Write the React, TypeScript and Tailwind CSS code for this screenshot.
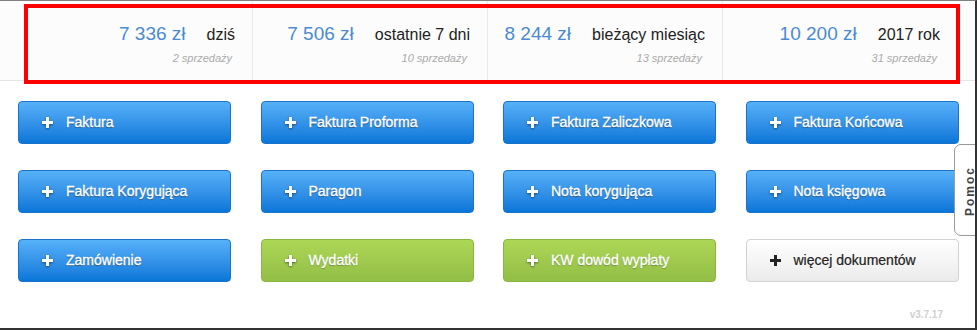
const stats = [
  { amount: '7 336 zł', label: 'dziś', sales: '2 sprzedaży' },
  { amount: '7 506 zł', label: 'ostatnie 7 dni', sales: '10 sprzedaży' },
  { amount: '8 244 zł', label: 'bieżący miesiąc', sales: '13 sprzedaży' },
  { amount: '10 200 zł', label: '2017 rok', sales: '31 sprzedaży' },
];

const buttons = [
  { label: 'Faktura', kind: 'blue' },
  { label: 'Faktura Proforma', kind: 'blue' },
  { label: 'Faktura Zaliczkowa', kind: 'blue' },
  { label: 'Faktura Końcowa', kind: 'blue' },
  { label: 'Faktura Korygująca', kind: 'blue' },
  { label: 'Paragon', kind: 'blue' },
  { label: 'Nota korygująca', kind: 'blue' },
  { label: 'Nota księgowa', kind: 'blue' },
  { label: 'Zamówienie', kind: 'blue' },
  { label: 'Wydatki', kind: 'green' },
  { label: 'KW dowód wypłaty', kind: 'green' },
  { label: 'więcej dokumentów', kind: 'white' },
];

const styles: Record<string, string> = {
  blue: 'border-[#1b72c6] bg-gradient-to-b from-[#56b1f9] to-[#0676d8] text-white [-webkit-text-stroke:0.35px_white] [text-shadow:0_1px_1px_rgba(0,0,0,0.5)]',
  green: 'border-[#8cb53f] bg-gradient-to-b from-[#acd755] to-[#93be47] text-white [-webkit-text-stroke:0.35px_white] [text-shadow:0_1px_1px_rgba(0,0,0,0.4)]',
  white: 'border-[#d2d2d2] bg-gradient-to-b from-[#ffffff] to-[#ebebeb] text-[#222] [-webkit-text-stroke:0.2px_#222]',
};

function PlusIcon({ dark }: { dark: boolean }) {
  return (
    <svg width="11" height="11" viewBox="0 0 11 11" className={dark ? '' : 'drop-shadow-[0_1px_1px_rgba(0,0,0,0.45)]'}>
      <rect x="4" y="0" width="3" height="11" fill={dark ? '#222' : '#fff'} />
      <rect x="0" y="4" width="11" height="3" fill={dark ? '#222' : '#fff'} />
    </svg>
  );
}

export default function App() {
  return (
    <div className="relative w-[977px] h-[330px] overflow-hidden bg-white border-t border-t-[#808080] border-r-2 border-r-[#333] border-b-2 border-b-[#333] font-['Liberation_Sans',Arial,sans-serif]">
      {/* stats band */}
      <div className="h-[80px] bg-[#fcfcfc] border-b border-[#e6e6e6]">
        <div className="ml-[17px] w-[940px] h-full grid grid-cols-4">
          {stats.map((s, i) => (
            <div key={i} className={`flex flex-col items-end pr-[17px] pt-[21px] ${i > 0 ? 'border-l border-[#e8e8ee]' : ''}`}>
              <div className="flex items-baseline gap-[21px]">
                <span className="text-[19px] leading-[24px] text-[#4a8bd1]">{s.amount}</span>
                <span className="text-[16px] leading-[24px] text-[#222]">{s.label}</span>
              </div>
              <span className="mt-[4px] mr-[3px] text-[11px] leading-[14px] italic text-[#aaa]">{s.sales}</span>
            </div>
          ))}
        </div>
      </div>

      {/* buttons */}
      <div className="ml-[18px] mt-[20px] grid grid-cols-[repeat(4,213px)] gap-x-[29.5px] gap-y-[26px]">
        {buttons.map((b) => (
          <button
            key={b.label}
            type="button"
            className={`h-[43px] rounded-[4px] border flex items-center pl-[23px] gap-[13px] text-[14px] ${styles[b.kind]}`}
          >
            <PlusIcon dark={b.kind === 'white'} />
            <span>{b.label}</span>
          </button>
        ))}
      </div>

      <div className="absolute right-[32px] bottom-[6px] text-[10px] font-bold text-[#d0d0d0]">v3.7.17</div>

      {/* help tab */}
      <div className="absolute left-[954px] top-[143px] w-[30px] h-[92px] bg-white border border-[#9a9a9a] rounded-l-[7px] flex items-center justify-start pl-[8px]">
        <span className="block -rotate-90 origin-center text-[12px] font-bold tracking-[2px] text-[#444] w-[14px] whitespace-nowrap">
          <span className="inline-block -translate-x-[19px]">Pomoc</span>
        </span>
      </div>

      {/* highlight frame */}
      <div className="absolute left-[24px] top-[3px] w-[936px] h-[80px] border-4 border-[#ff0000]" />
    </div>
  );
}
